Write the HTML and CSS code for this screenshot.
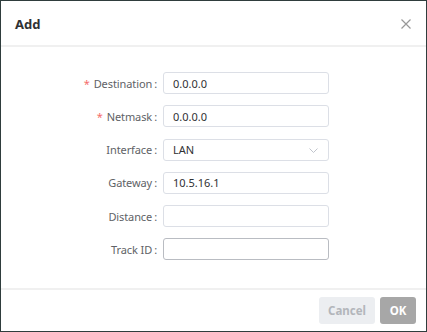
FILE: index.html
```html
<!DOCTYPE html>
<html lang="en">
<head>
    <meta charset="UTF-8">
    <meta name="viewport" content="width=device-width, initial-scale=1.0">
    <title>Add</title>
    <link rel="stylesheet" href="styles.css">
</head>
<body>
    <div class="dialog">
        <header class="dialog-header">
            <span class="dialog-title">Add</span>
            <button class="close-btn" type="button" aria-label="Close">
                <svg width="10" height="10" viewBox="0 0 10 10">
                    <path d="M0.5 0.5 L9.5 9.5 M9.5 0.5 L0.5 9.5" stroke="#999" stroke-width="1.2" fill="none"/>
                </svg>
            </button>
        </header>

        <form class="dialog-body">
            <div class="form-row">
                <label><span class="req">*</span>Destination<span class="colon">:</span></label>
                <input type="text" value="0.0.0.0">
            </div>
            <div class="form-row">
                <label><span class="req">*</span>Netmask<span class="colon">:</span></label>
                <input type="text" value="0.0.0.0">
            </div>
            <div class="form-row">
                <label>Interface<span class="colon">:</span></label>
                <div class="select">
                    <input type="text" value="LAN" readonly>
                    <svg class="select-arrow" width="9" height="5" viewBox="0 0 9 5">
                        <polyline points="0.5,0.5 4.5,4.5 8.5,0.5" stroke="#c0c4cc" stroke-width="1" fill="none"/>
                    </svg>
                </div>
            </div>
            <div class="form-row">
                <label>Gateway<span class="colon">:</span></label>
                <input type="text" value="10.5.16.1">
            </div>
            <div class="form-row">
                <label>Distance<span class="colon">:</span></label>
                <input type="text" value="">
            </div>
            <div class="form-row">
                <label>Track ID<span class="colon">:</span></label>
                <input type="text" value="" class="active">
            </div>
        </form>

        <footer class="dialog-footer">
            <button class="btn btn-cancel" type="button">Cancel</button>
            <button class="btn btn-ok" type="button">OK</button>
        </footer>
    </div>
</body>
</html>
```

FILE: styles.css
```css
* {
    box-sizing: border-box;
}

body {
    margin: 0;
    font-family: "Noto Sans", "Open Sans", sans-serif;
    font-size: 11px;
    color: #303133;
    background-color: #fff;
}

.dialog {
    width: 427px;
    height: 332px;
    border: 1px solid #2f3d3d;
    background-color: #fff;
    display: flex;
    flex-direction: column;
}

.dialog-header {
    height: 46px;
    padding: 2px 15px 0 14px;
    border-bottom: 2px solid #f0f0f0;
    display: flex;
    align-items: center;
    justify-content: space-between;
}

.dialog-title {
    font-size: 13px;
    font-weight: bold;
    color: #303133;
}

.close-btn {
    border: none;
    background: none;
    padding: 0;
    width: 10px;
    height: 10px;
    display: flex;
    cursor: pointer;
}

.dialog-body {
    flex-grow: 1;
    margin: 0;
    padding-top: 25px;
    display: flex;
    flex-direction: column;
    gap: 11.3px;
}

.form-row {
    display: flex;
    align-items: center;
    gap: 6px;
}

.form-row label {
    width: 156px;
    text-align: right;
    color: #606266;
    letter-spacing: -0.1px;
}

.req {
    color: #f56c6c;
    margin-right: 4px;
}

.colon {
    margin-left: 2px;
}

.form-row input {
    width: 166px;
    height: 22px;
    padding: 0 9px;
    border: 1px solid #dcdfe6;
    border-radius: 3px;
    font-family: inherit;
    font-size: 11px;
    color: #303133;
    outline: none;
}

.form-row input.active {
    border-color: #b9bcc2;
}

.select {
    position: relative;
    display: flex;
}

.select-arrow {
    position: absolute;
    right: 11px;
    top: 9px;
}

.dialog-footer {
    border-top: 2px solid #f0f0f0;
    padding: 7px 10px 7px 0;
    display: flex;
    justify-content: flex-end;
    gap: 5px;
}

.btn {
    height: 27px;
    border: none;
    border-radius: 3px;
    font-family: inherit;
    font-size: 11.5px;
    font-weight: bold;
}

.btn-cancel {
    width: 56px;
    background-color: #eceef1;
    color: #b3b6bb;
}

.btn-ok {
    width: 36px;
    background-color: #a7a7a7;
    color: #fff;
}
```
